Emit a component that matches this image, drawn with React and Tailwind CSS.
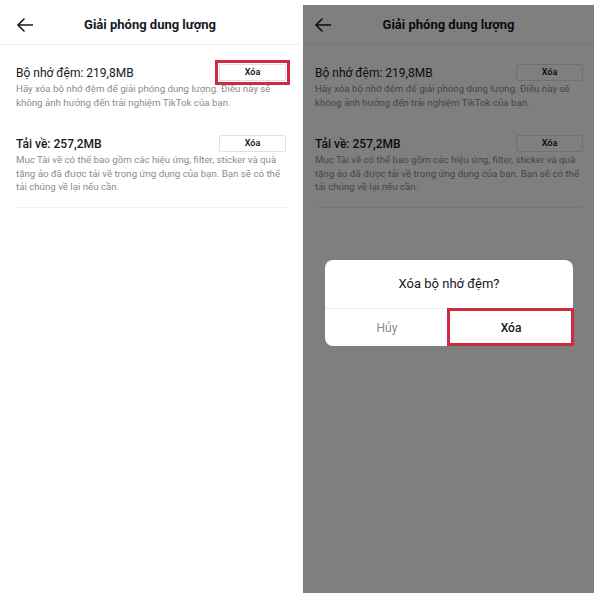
import React from "react";

function Arrow() {
  return (
    <svg width="16" height="14" viewBox="0 0 16 14" fill="none" stroke="#161823" strokeWidth="1.6" strokeLinecap="round" strokeLinejoin="round">
      <path d="M7 1 L1 7 L7 13" />
      <path d="M1.2 7 H15.5" />
    </svg>
  );
}

function XoaButton({ highlight }) {
  return (
    <div className="relative flex h-[17px] w-[67px] items-center justify-center rounded-[2px] border border-[#e1e1e3] bg-white text-[9px] font-semibold text-[#161823]">
      Xóa
      {highlight && <div className="absolute -bottom-[5px] -left-[5px] -right-[5px] -top-[5px] border-[3px] border-[#cf2a3f]" />}
    </div>
  );
}

function Screen({ right, highlight }) {
  return (
    <div className="flex h-full flex-col bg-white font-['Roboto',sans-serif] text-[#161823]">
      <div
        className={
          right
            ? "grid h-[40px] shrink-0 grid-cols-[48px_1fr_48px] items-center border-b border-[#ececec]"
            : "grid h-[45px] shrink-0 grid-cols-[48px_1fr_48px] items-center border-b border-[#ececec] pt-[5px]"
        }
      >
        <div className={right ? "pl-[12px]" : "pl-[17px]"}>
          <Arrow />
        </div>
        <div className="text-center text-[13px] font-bold">Giải phóng dung lượng</div>
        <div />
      </div>
      <div className={right ? "pl-[12px] pr-[11px]" : "pl-[16px] pr-[14px]"}>
        <div className="mt-[19px] flex h-[17px] items-center justify-between">
          <div className="text-[12px] leading-[16px]">Bộ nhớ đệm: 219,8MB</div>
          <XoaButton highlight={highlight} />
        </div>
        <div className="mt-[1px] text-[9.7px] leading-[13.5px] text-[#8a8b91]">
          Hãy xóa bộ nhớ đệm để giải phóng dung lượng. Điều này sẽ không ảnh hưởng đến trải nghiệm TikTok của bạn.
        </div>
        <div className="mt-[26px] flex h-[17px] items-center justify-between">
          <div className="text-[12px] font-medium leading-[16px]">Tải về: 257,2MB</div>
          <XoaButton />
        </div>
        <div className="mt-[1px] border-b border-[#efefef] pb-[13px] text-[9.7px] leading-[13.5px] text-[#8a8b91]">
          Mục Tài về có thể bao gồm các hiệu ứng, filter, sticker và quà tặng ảo đã được tải về trong ứng dụng của bạn. Bạn sẽ có thể tải chúng về lại nếu cần.
        </div>
      </div>
    </div>
  );
}

export default function App() {
  return (
    <div className="flex h-[600px] w-[600px] bg-white">
      <div className="h-[600px] w-[300px] shrink-0">
        <Screen highlight />
      </div>
      <div className="relative ml-[3px] mt-[5px] h-[588px] w-[291px] shrink-0 overflow-hidden">
        <Screen right />
        <div className="absolute inset-0 bg-black/50" />
        <div className="absolute left-[22px] top-[255px] flex h-[86px] w-[248px] flex-col rounded-[8px] bg-white font-['Roboto',sans-serif]">
          <div className="flex h-[48px] items-center justify-center text-[13px] text-[#161823]">Xóa bộ nhớ đệm?</div>
          <div className="grid h-[38px] grid-cols-2 border-t border-[#ececec]">
            <div className="flex items-center justify-center text-[12px] text-[#8a8b91]">Hủy</div>
            <div className="flex items-center justify-center text-[12px] font-medium text-[#161823]">Xóa</div>
          </div>
        </div>
        <div className="absolute left-[144px] top-[303px] h-[38px] w-[127px] border-[3px] border-[#cf2a3f]" />
      </div>
    </div>
  );
}
